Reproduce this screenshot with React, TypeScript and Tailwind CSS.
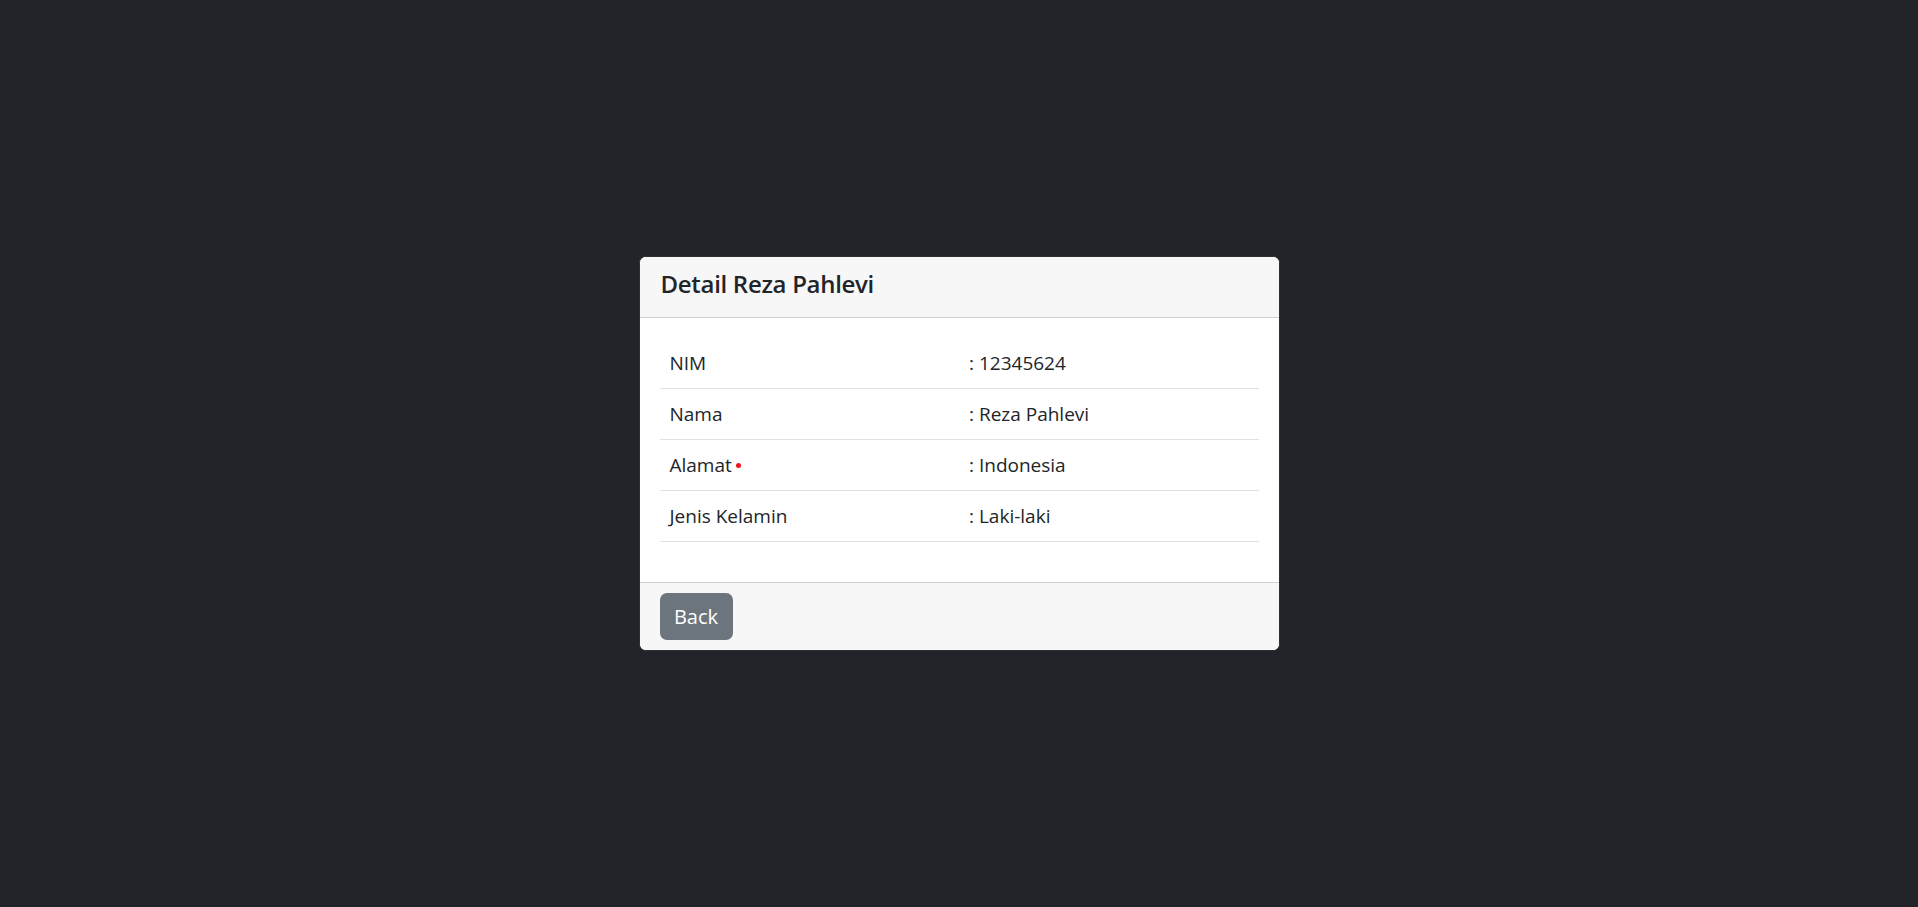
import React from 'react';

interface Row {
  label: string;
  value: string;
  required?: boolean;
}

const rows: Row[] = [
  { label: 'NIM', value: '12345624' },
  { label: 'Nama', value: 'Reza Pahlevi' },
  { label: 'Alamat', value: 'Indonesia', required: true },
  { label: 'Jenis Kelamin', value: 'Laki-laki' },
];

const App: React.FC = () => {
  return (
    <div
      className="min-h-screen w-full flex items-center justify-center bg-[#212529] text-[#212529]"
      style={{ fontFamily: '"Open Sans", "Noto Sans", sans-serif' }}
    >
      <div className="w-[641px] bg-white rounded-[7px] border border-[#2c2f33] overflow-hidden">
        {/* header */}
        <div className="h-[61px] px-[21px] flex items-center bg-[#f7f7f7] border-b border-[#d0d0d0]">
          <h5 className="text-[24px] font-semibold leading-[30px] mb-[6px] tracking-[-0.3px]">Detail Reza Pahlevi</h5>
        </div>

        {/* body */}
        <div className="p-[20px]">
          <table className="w-full mb-[20px] border-collapse text-[19px]">
            <tbody>
              {rows.map((row) => (
                <tr key={row.label} className="h-[51px] border-b border-[#dee2e6]">
                  <td className="w-1/2 px-[10px] align-middle">
                    {row.label}
                    {row.required && (
                      <span className="inline-block w-[5px] h-[5px] rounded-full bg-[#f0141c] ml-[4px] align-middle mb-[2px]" />
                    )}
                  </td>
                  <td className="w-1/2 px-[10px] align-middle">: {row.value}</td>
                </tr>
              ))}
            </tbody>
          </table>
        </div>

        {/* footer */}
        <div className="px-[20px] py-[10px] bg-[#f7f7f7] border-t border-[#d0d0d0]">
          <button className="h-[47px] w-[73px] rounded-[7px] bg-[#6c757d] text-white text-[20px] flex items-center justify-center">
            Back
          </button>
        </div>
      </div>
    </div>
  );
};

export default App;
